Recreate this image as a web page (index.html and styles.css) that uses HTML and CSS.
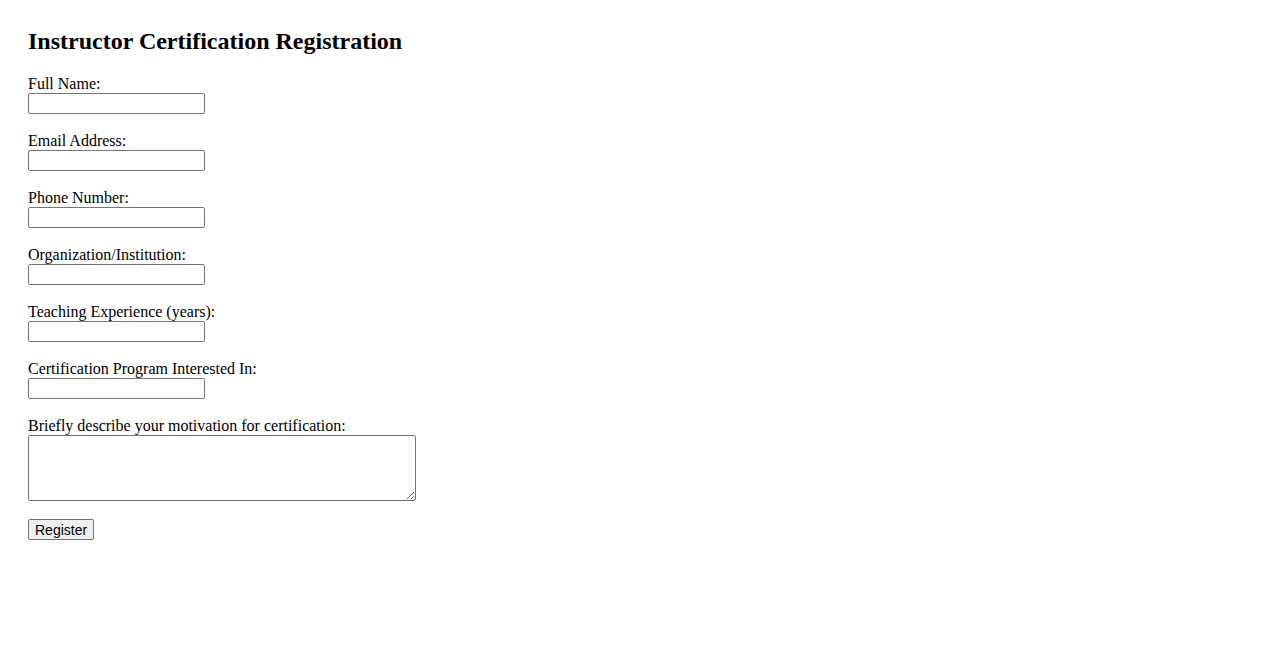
FILE: index.html
```html
<!DOCTYPE html>
<html>
<head>
<meta charset="utf-8">
<title>Instructor Certification Registration</title>
<link rel="stylesheet" href="styles.css">
</head>
<body>
<h2 class="title">Instructor Certification Registration</h2>
<form class="form">
<label for="name">Full Name:</label><br>
<input class="field" type="text" id="name"><br><br>
<label for="email">Email Address:</label><br>
<input class="field" type="email" id="email"><br><br>
<label for="phone">Phone Number:</label><br>
<input class="field" type="tel" id="phone"><br><br>
<label for="org">Organization/Institution:</label><br>
<input class="field" type="text" id="org"><br><br>
<label for="exp">Teaching Experience (years):</label><br>
<input class="field" type="text" id="exp"><br><br>
<label for="prog">Certification Program Interested In:</label><br>
<input class="field" type="text" id="prog"><br><br>
<label for="motivation">Briefly describe your motivation for certification:</label><br>
<textarea class="area" id="motivation"></textarea><br><br>
<button class="submit" type="submit">Register</button>
</form>
</body>
</html>
```
FILE: styles.css
```css
body {
  margin: 28px;
  font-family: "Liberation Serif", "Times New Roman", serif;
  font-size: 16px;
  color: #000;
  background: #fff;
}
.title {
  font-size: 24px;
  font-weight: bold;
  margin: 0 0 20px 0;
}
.field {
  width: 177px;
  height: 21px;
  box-sizing: border-box;
  border: 1px solid #767676;
  border-radius: 2px;
  font-family: "Liberation Sans", Arial, sans-serif;
  font-size: 13.33px;
  padding: 1px 2px;
  margin: 0;
}
.area {
  width: 388px;
  height: 66px;
  box-sizing: border-box;
  border: 1px solid #767676;
  border-radius: 2px;
  font-family: "Liberation Mono", monospace;
  font-size: 13.33px;
  padding: 2px;
  margin: 0;
  vertical-align: text-bottom;
}
.submit {
  font-family: "Liberation Sans", Arial, sans-serif;
  font-size: 14px;
  width: 66px;
  height: 21px;
  padding: 0 6px;
  margin: -1px 0 0 0;
  border: 1px solid #767676;
  border-radius: 2px;
  background: #efefef;
  color: #000;
  vertical-align: top;
}
```
